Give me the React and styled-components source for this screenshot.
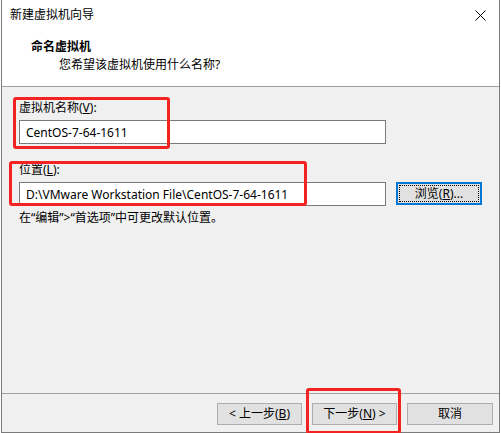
import styled, { createGlobalStyle } from 'styled-components'

const GlobalStyle = createGlobalStyle`
  html, body {
    margin: 0;
    padding: 0;
    background: #fff;
  }
  body {
    font-family: "Noto Sans", "Noto Sans CJK SC", sans-serif;
    font-size: 12px;
    color: #000;
  }
`

const Page = styled.div`
  position: relative;
  width: 501px;
  height: 433px;
  overflow: hidden;
`

const Window = styled.div`
  box-sizing: border-box;
  margin-left: 1px;
  width: 499px;
  height: 433px;
  border: 1px solid #7a7a7a;
  border-top: none;
  display: flex;
  flex-direction: column;
  background: #f0f0f0;
`

const TitleBar = styled.div`
  height: 30px;
  background: #fff;
  display: flex;
  align-items: center;
  justify-content: space-between;
  padding: 0 10px 0 8px;
`

const Title = styled.span`
  font-size: 12px;
  line-height: 16px;
`

const CloseIcon = styled.svg`
  width: 11px;
  height: 11px;
  margin-right: 3px;
`

const Header = styled.div`
  height: 57px;
  box-sizing: border-box;
  background: #fff;
  border-bottom: 1px solid #a0a0a0;
  padding: 9px 0 0 29px;
`

const Heading = styled.div`
  font-weight: 700;
  line-height: 16px;
`

const Subtitle = styled.div`
  margin: 2px 0 0 28px;
  line-height: 16px;
`

const Content = styled.div`
  flex: 1;
  padding: 13px 0 0 17px;
  display: flex;
  flex-direction: column;
`

const Label = styled.div`
  line-height: 16px;
  margin-top: ${p => p.$top || 0}px;
`

const Key = styled.span`
  text-decoration: underline;
`

const Row = styled.div`
  display: flex;
  align-items: flex-start;
  gap: 10px;
  margin-top: 4px;
`

const Field = styled.div`
  box-sizing: border-box;
  width: 367px;
  height: 24px;
  background: #fff;
  border: 1px solid #7a7a7a;
  padding: 0 6px;
  display: flex;
  align-items: center;
  white-space: nowrap;
  overflow: hidden;
`

const Hint = styled.div`
  line-height: 16px;
  margin-top: 4px;
`

const Button = styled.div`
  position: relative;
  box-sizing: border-box;
  width: ${p => p.$w || 85}px;
  height: ${p => p.$h || 22}px;
  background: #e1e1e1;
  border: 1px solid ${p => (p.$focus ? '#0078d7' : '#adadad')};
  box-shadow: ${p => (p.$focus ? 'inset 0 0 0 1px #0078d7' : 'none')};
  display: flex;
  align-items: center;
  justify-content: center;
  white-space: nowrap;
  line-height: 16px;

  &::after {
    content: '';
    display: ${p => (p.$focus ? 'block' : 'none')};
    position: absolute;
    inset: 2px;
    border: 1px dotted #000;
  }
`

const Footer = styled.div`
  height: 39px;
  box-sizing: border-box;
  border-top: 1px solid #a0a0a0;
  display: flex;
  justify-content: flex-end;
  gap: 10px;
  padding: 9px 6px 0 0;
`

const Mark = styled.div`
  position: absolute;
  box-sizing: border-box;
  left: ${p => p.$x}px;
  top: ${p => p.$y}px;
  width: ${p => p.$w}px;
  height: ${p => p.$h}px;
  border: 3px solid #f52222;
  border-radius: 3px;
  pointer-events: none;
`

export default function App() {
  return (
    <Page>
      <GlobalStyle />
      <Window>
        <TitleBar>
          <Title>新建虚拟机向导</Title>
          <CloseIcon viewBox="0 0 11 11">
            <path d="M0.5 0.5 L10.5 10.5 M10.5 0.5 L0.5 10.5" stroke="#000" strokeWidth="1" fill="none" />
          </CloseIcon>
        </TitleBar>
        <Header>
          <Heading>命名虚拟机</Heading>
          <Subtitle>您希望该虚拟机使用什么名称?</Subtitle>
        </Header>
        <Content>
          <Label>虚拟机名称(<Key>V</Key>):</Label>
          <Row>
            <Field>CentOS-7-64-1611</Field>
          </Row>
          <Label $top={18}>位置(<Key>L</Key>):</Label>
          <Row>
            <Field>D:\VMware Workstation File\CentOS-7-64-1611</Field>
            <Button $focus $w={86} $h={23}>浏览(<Key>R</Key>)...</Button>
          </Row>
          <Hint>在“编辑”&gt;“首选项”中可更改默认位置。</Hint>
        </Content>
        <Footer>
          <Button>&lt; 上一步(<Key>B</Key>)</Button>
          <Button>下一步(<Key>N</Key>) &gt;</Button>
          <Button $w={86}>取消</Button>
        </Footer>
      </Window>
      <Mark $x={13} $y={97} $w={157} $h={52} />
      <Mark $x={9} $y={161} $w={298} $h={45} />
      <Mark $x={306} $y={388} $w={95} $h={46} />
    </Page>
  )
}
